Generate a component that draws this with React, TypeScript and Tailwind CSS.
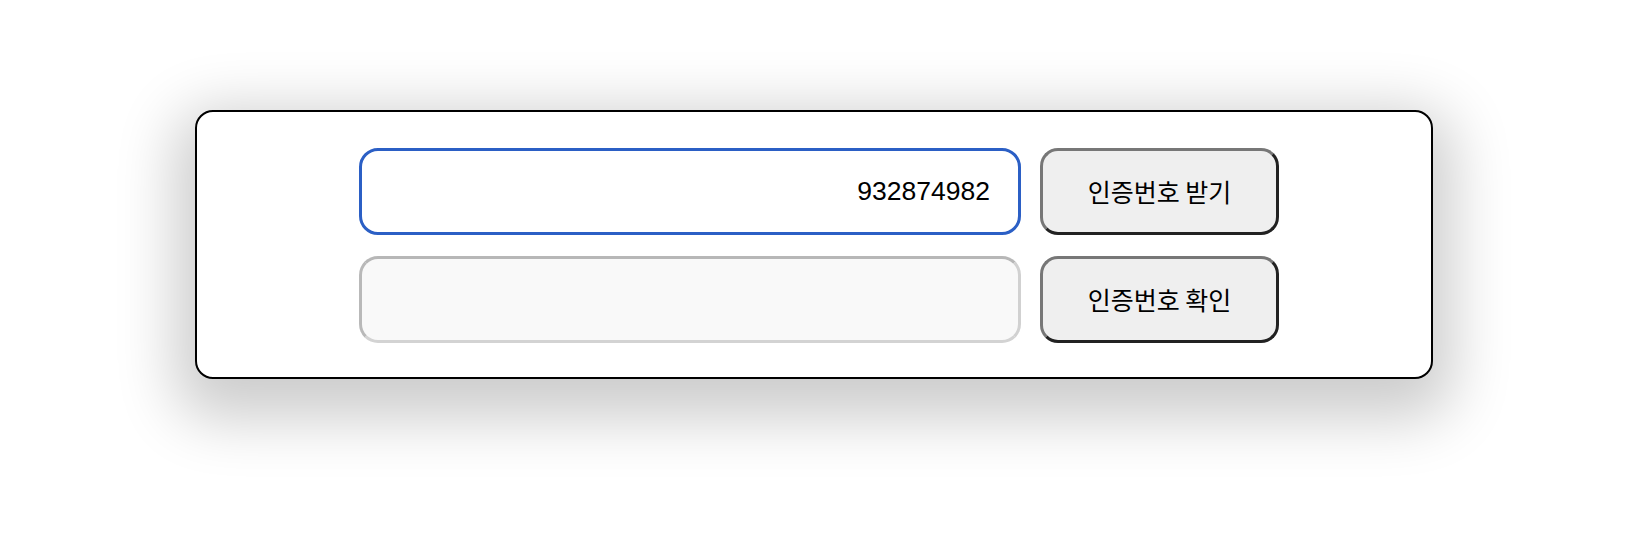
import React from "react";

export default function App() {
  return (
    <div className="w-[1644px] h-[540px] bg-white pt-[110px] pl-[195px]" style={{ fontFamily: '"Liberation Sans", "Noto Sans CJK KR", sans-serif' }}>
      <div className="w-[1238px] h-[269px] bg-white border-2 border-black rounded-[18px] shadow-[0_20px_60px_20px_rgba(0,0,0,0.2)] pt-[36px] pl-[162px]">
        <div className="grid grid-cols-[662px_239px] gap-x-[19px] gap-y-[21px]">
          <div className="h-[87px] rounded-[19px] border-[3px] border-[#2b5fc5] bg-white flex items-center justify-end pr-[28px]">
            <span className="text-[26.5px] text-black leading-none">932874982</span>
          </div>
          <button className="h-[87px] rounded-[18px] border-[3px] border-t-[#777777] border-l-[#777777] border-b-[#222222] border-r-[#222222] bg-[#efefef] flex items-center justify-center text-[25px] text-black" style={{ fontFamily: '"Noto Sans CJK KR", sans-serif' }}>
            인증번호 받기
          </button>
          <div className="h-[87px] rounded-[19px] border-[3px] border-t-[#b7b7b7] border-l-[#b9b9b9] border-b-[#d3d3d3] border-r-[#d1d1d1] bg-[#f9f9f9]"></div>
          <button className="h-[87px] rounded-[18px] border-[3px] border-t-[#777777] border-l-[#777777] border-b-[#222222] border-r-[#222222] bg-[#efefef] flex items-center justify-center text-[25px] text-black" style={{ fontFamily: '"Noto Sans CJK KR", sans-serif' }}>
            인증번호 확인
          </button>
        </div>
      </div>
    </div>
  );
}
